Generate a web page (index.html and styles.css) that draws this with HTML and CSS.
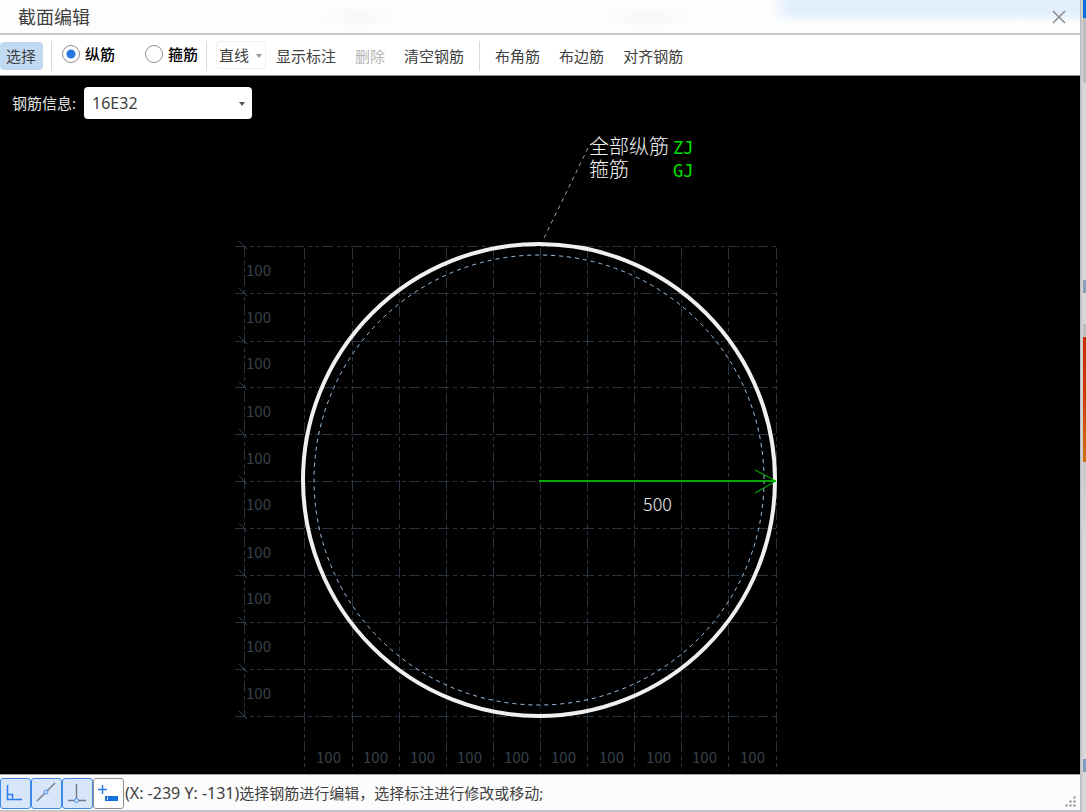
FILE: index.html
```html
<!DOCTYPE html>
<html lang="zh-CN">
<head>
<meta charset="utf-8">
<meta name="viewport" content="width=device-width, initial-scale=1">
<title>截面编辑</title>
<link rel="stylesheet" href="styles.css">
</head>
<body>
<div class="window">
  <header class="titlebar">
    <h1 class="title">截面编辑</h1>
    <button class="close" type="button" aria-label="关闭">
      <svg width="14" height="14" viewBox="0 0 14 14"><path d="M1 1L13 13M13 1L1 13"/></svg>
    </button>
  </header>

  <div class="toolbar">
    <button class="tool tool-active" type="button">选择</button>
    <span class="divider"></span>
    <div class="radios">
      <label class="radio"><input type="radio" name="bar" checked>纵筋</label>
      <label class="radio"><input type="radio" name="bar">箍筋</label>
    </div>
    <span class="divider"></span>
    <span class="picker picker-line">
      <select aria-label="绘制方式"><option>直线</option></select>
    </span>
    <div class="group">
      <button class="tool" type="button">显示标注</button>
      <button class="tool" type="button" disabled>删除</button>
      <button class="tool" type="button">清空钢筋</button>
    </div>
    <span class="divider"></span>
    <div class="group">
      <button class="tool" type="button">布角筋</button>
      <button class="tool" type="button">布边筋</button>
      <button class="tool" type="button">对齐钢筋</button>
    </div>
  </div>

  <main class="canvas">
    <svg class="drawing" viewBox="0 76 1080 698" preserveAspectRatio="xMidYMid meet">
      <g class="grid">
        <path d="M235 246H776M235 293H776M235 341H776M235 387H776M235 434H776M235 481H776M235 528H776M235 575H776M235 622H776M235 669H776M235 716H776"/>
        <path d="M304 248V771M352 248V771M399 248V771M446 248V771M493 248V771M540 248V771M587 248V771M634 248V771M681 248V771M728 248V771M776 248V771M244 246V716"/>
      </g>
      <path class="ticks" d="M239 241l8 8M239 288l8 8M239 336l8 8M239 382l8 8M239 429l8 8M239 476l8 8M239 523l8 8M239 570l8 8M239 617l8 8M239 664l8 8M239 711l8 8"/>
      <g class="dims">
        <text x="246" y="276">100</text><text x="246" y="323">100</text>
        <text x="246" y="369">100</text><text x="246" y="417">100</text>
        <text x="246" y="464">100</text><text x="246" y="510">100</text>
        <text x="246" y="558">100</text><text x="246" y="604">100</text>
        <text x="246" y="652">100</text><text x="246" y="699">100</text>
        <text x="316" y="763">100</text><text x="363" y="763">100</text>
        <text x="410" y="763">100</text><text x="457" y="763">100</text>
        <text x="504" y="763">100</text><text x="551" y="763">100</text>
        <text x="599" y="763">100</text><text x="646" y="763">100</text>
        <text x="692" y="763">100</text><text x="740" y="763">100</text>
      </g>
      <circle class="cover" cx="539" cy="480" r="225"/>
      <circle class="outline" cx="539" cy="480" r="236"/>
      <path class="leader" d="M588 148L543 240"/>
      <path class="radius" d="M539 481H776"/>
      <path class="arrow" d="M755 470L776 481L755 493"/>
      <text class="size" x="643" y="511">500</text>
      <text class="note" x="589" y="154">全部纵筋</text>
      <text class="note" x="589" y="177">箍筋</text>
      <text class="code" x="673" y="154">ZJ</text>
      <text class="code" x="673" y="177">GJ</text>
    </svg>
    <div class="field">
      <label for="rebar">钢筋信息:</label>
      <span class="picker picker-rebar">
        <select id="rebar"><option>16E32</option></select>
      </span>
    </div>
  </main>

  <footer class="status">
    <div class="snaps">
      <button class="snap snap-on" type="button" aria-label="正交">
        <svg width="29" height="29" viewBox="0 0 29 29"><path class="blue" d="M6.500 6V20.500H21M6.500 15.500H11.500V20.500"/></svg>
      </button>
      <button class="snap snap-on" type="button" aria-label="中点捕捉">
        <svg width="29" height="29" viewBox="0 0 29 29"><path class="gray" d="M5 22L23 4"/><circle class="dot" cx="14" cy="13" r="2"/></svg>
      </button>
      <button class="snap snap-on" type="button" aria-label="垂足捕捉">
        <svg width="29" height="29" viewBox="0 0 29 29"><path class="gray" d="M13.500 5V21.500M5 21.500H23"/><circle class="dot" cx="13.500" cy="21.500" r="2"/></svg>
      </button>
      <button class="snap" type="button" aria-label="动态输入">
        <svg width="29" height="29" viewBox="0 0 29 29"><path class="blue" d="M4 10.500H13M8.500 6V15"/><path class="fill" d="M11 17H24V22H11Z"/><path class="slot" d="M13.500 18V21"/></svg>
      </button>
    </div>
    <output class="message"><span class="coords">(X: -239 Y: -131)</span>选择钢筋进行编辑，选择标注进行修改或移动;</output>
    <svg class="grip" width="11" height="11" viewBox="0 0 11 11"><path d="M8 0h3v3h-3zM8 4h3v3h-3zM8 8h3v3h-3zM4 4h3v3h-3zM4 8h3v3h-3zM0 8h3v3h-3z"/></svg>
  </footer>
</div>
<div class="backdrop"></div>
</body>
</html>
```

FILE: styles.css
```css
* {
  box-sizing: border-box;
}

body {
  margin: 0;
  display: flex;
  min-height: 100vh;
  background: #fff;
  color: #404040;
  font: 15px/20px "Noto Sans", "Noto Sans CJK SC", sans-serif;
}

button,
select {
  margin: 0;
  padding: 0;
  border: 0;
  background: none;
  color: inherit;
  font: inherit;
}

svg {
  display: block;
  fill: none;
}

.window {
  flex: 1;
  min-width: 0;
  display: flex;
  flex-direction: column;
  border-right: 1px solid #b9bbbe;
}

.titlebar {
  display: flex;
  align-items: center;
  justify-content: space-between;
  height: 35px;
  padding: 0 14px 0 18px;
  border-bottom: 2px solid #c5c7cb;
  background:
    radial-gradient(ellipse 40px 12px at 358px 17px, #f7f7f7, transparent),
    radial-gradient(ellipse 50px 12px at 648px 17px, #f7f7f7, transparent),
    linear-gradient(90deg, #fdfdfd 770px, transparent 790px),
    linear-gradient(#e2effc 12px, #fdfdfd 24px);
}

.title {
  margin: 0;
  font-size: 18px;
  line-height: 24px;
  font-weight: 400;
}

.close svg {
  stroke: #8c8c8c;
  stroke-width: 1.5;
}

.toolbar {
  display: flex;
  align-items: center;
  height: 41px;
  padding-top: 1px;
  border-bottom: 1px solid #8a8a8a;
  background: #fff;
  white-space: nowrap;
}

.tool {
  height: 28px;
}

.tool:disabled {
  color: #b4b4b4;
}

.tool-active {
  padding: 0 7px 0 6px;
  border-radius: 4px;
  background: #c2d9f2;
}

.divider {
  width: 1px;
  height: 30px;
  margin: 0 9px 0 8px;
  background: #d8d8d8;
}

.radios {
  display: flex;
  gap: 30px;
  padding: 0 0 4px 1px;
  color: #000;
  font-weight: 500;
}

.radio {
  display: flex;
  align-items: center;
  gap: 5px;
}

.radio input {
  appearance: none;
  width: 18px;
  height: 18px;
  margin: 0;
  border: 1px solid #8f8f8f;
  border-radius: 50%;
  background: #fff;
}

.radio input:checked {
  background: radial-gradient(circle, #2878e4 4px, #fff 5px);
}

.picker {
  position: relative;
  display: flex;
}

.picker select {
  appearance: none;
  width: 100%;
}

.picker::after {
  content: "";
  position: absolute;
  top: 50%;
  right: 7px;
  margin-top: -1px;
  border: 3px solid transparent;
  border-top: 4px solid #555;
  border-bottom: 0;
  pointer-events: none;
}

.picker-line {
  width: 50px;
  height: 28px;
  margin-bottom: 2px;
  border: 1px solid #f0f0f0;
  border-radius: 4px;
}

.picker-line select {
  padding-left: 2px;
}

.picker-line::after {
  right: 3px;
  border-top-color: #999;
}

.group {
  display: flex;
  gap: 19px;
  padding: 0 7px 0 6px;
}

.picker-line + .group {
  padding-left: 10px;
}

.canvas {
  position: relative;
  flex: 1;
  min-height: 0;
  background: #000;
}

.drawing {
  position: absolute;
  inset: 0;
  width: 100%;
  height: 100%;
}

.field {
  position: relative;
  display: flex;
  align-items: center;
  gap: 8px;
  padding: 11px 12px;
  color: #e0e0e0;
}

.picker-rebar {
  width: 168px;
  height: 32px;
  border-radius: 4px;
  background: #fff;
  color: #404040;
  font-size: 16px;
}

.picker-rebar select {
  padding-left: 8px;
}

.grid {
  stroke: #2a343e;
  stroke-dasharray: 11 4 4 3 4 3;
  shape-rendering: crispEdges;
}

.ticks {
  stroke: #36414c;
}

.dims {
  fill: #36404a;
  font: 15px/20px "Noto Sans CJK SC", sans-serif;
}

.outline {
  stroke: #f0f0f0;
  stroke-width: 4;
}

.cover {
  stroke: #9cc4e8;
  stroke-dasharray: 4 4;
}

.leader {
  stroke: #a0a0a0;
  stroke-dasharray: 4 4;
}

.radius {
  stroke: #00a800;
  stroke-width: 2;
}

.arrow {
  stroke: #00d000;
}

.size {
  fill: #e8e8e8;
  font: 300 18px/20px "Noto Sans CJK SC", sans-serif;
}

.note {
  fill: #f4f4f4;
  font: 300 20px/24px "Liberation Sans", "Noto Sans CJK SC", sans-serif;
}

.code {
  fill: #00e000;
  font: 17px/20px "DejaVu Sans Mono", monospace;
}

.status {
  display: flex;
  align-items: center;
  height: 38px;
  border-top: 1px solid #a8a8a8;
  border-bottom: 2px solid #c4c6c9;
  background: #fcfcfc;
}

.snaps {
  display: flex;
  padding-top: 1px;
}

.snap {
  width: 31px;
  height: 31px;
  border: 1px solid #8f8f8f;
  border-radius: 3px;
  background: #fff;
}

.snap-on {
  border-color: #3f8ae8;
  background: #d8e6fa;
}

.blue {
  stroke: #2b7de9;
  stroke-width: 1.5;
}

.gray {
  stroke: #737b88;
  stroke-width: 1.5;
}

.dot {
  fill: #d8e6fa;
  stroke: #4a90ea;
}

.fill {
  fill: #1670e0;
}

.slot {
  stroke: #d8e6fa;
}

.message {
  flex: 1;
  padding-left: 1px;
}

.coords {
  font-size: 16px;
}

.grip {
  align-self: flex-end;
  margin: 0 4px 3px 0;
  fill: #858b93;
  stroke: #fcfcfc;
}

.backdrop {
  width: 5px;
  border-left: 2px solid #cfcfcf;
  background: linear-gradient(
    #0a6fd8 18px, #bdbdbd 18px, #bdbdbd 83px, #d8d8d8 83px, #d8d8d8 280px,
    #8ba0b8 280px, #8ba0b8 293px, #d8d8d8 293px, #d8d8d8 324px,
    #bdbdbd 324px, #bdbdbd 337px, #c92a08 337px, #cf3c04 400px, #d07410 462px,
    #c8c8c8 462px, #d8d8d8 540px, #d8d8d8 759px, #7f9dbe 759px, #7f9dbe 772px,
    #d8d8d8 772px);
}
```
